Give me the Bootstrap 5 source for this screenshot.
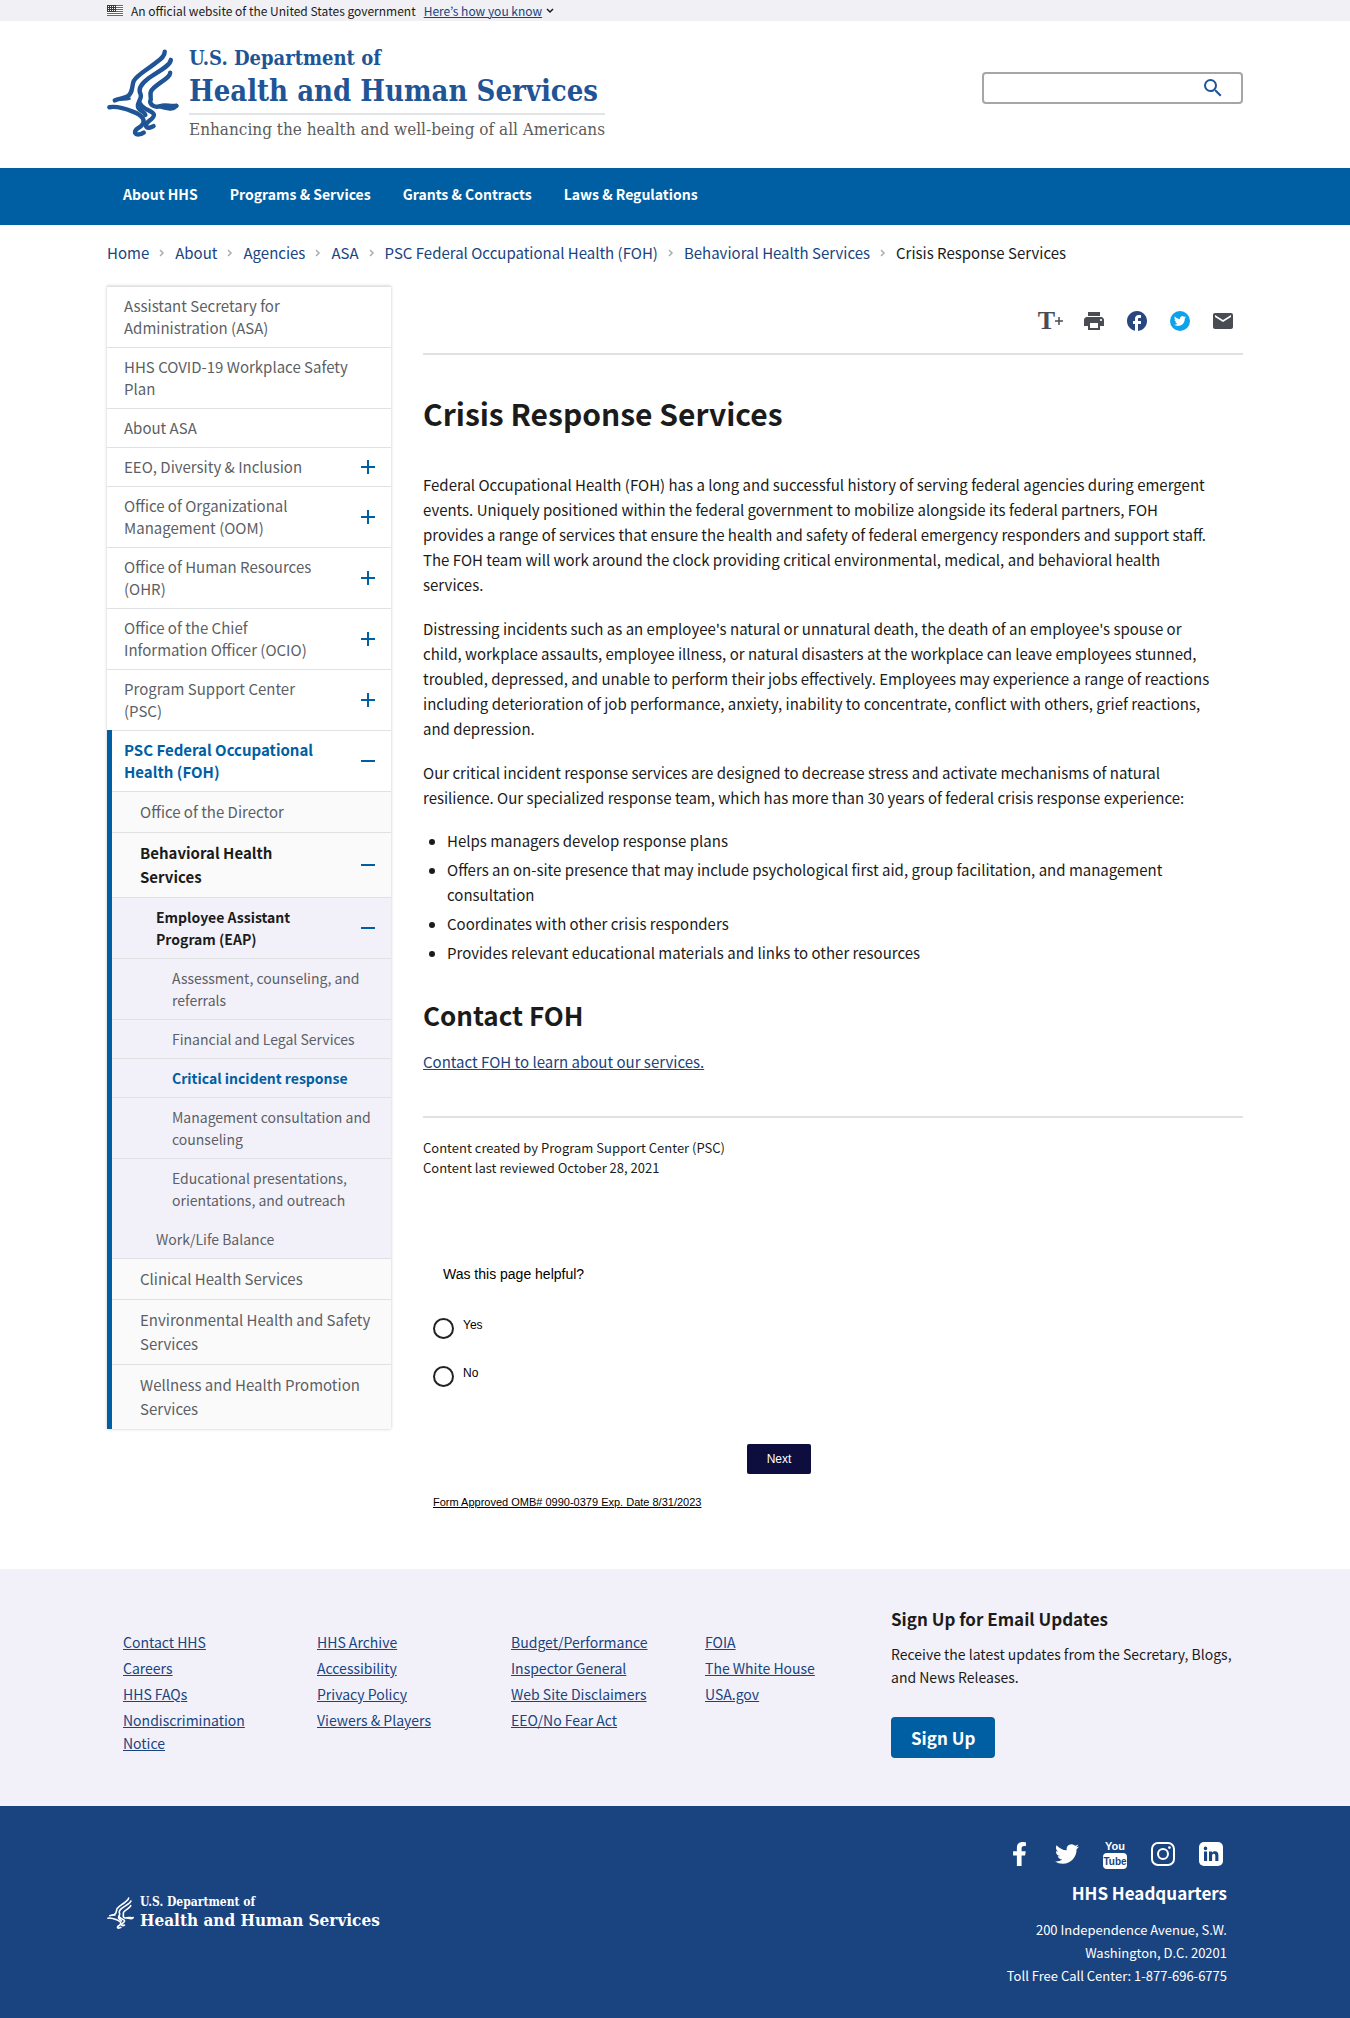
<!DOCTYPE html>
<html lang="en">
<head>
<meta charset="utf-8">
<meta name="viewport" content="width=device-width, initial-scale=1">
<title>Crisis Response Services | HHS.gov</title>
<link href="https://cdn.jsdelivr.net/npm/bootstrap@5.3.0/dist/css/bootstrap.min.css" rel="stylesheet">
<style>
  :root { --hhs-blue: #005ea2; --hhs-navy: #1a4480; --hhs-ink: #1b1b1b; --hhs-mist: #f2f1f9; --hhs-line: #dfe1e2; }
  body { font-family: "Noto Sans CJK KR", "Open Sans", sans-serif; font-size: 15px; line-height: 25px; color: var(--hhs-ink); }
  a { color: var(--hhs-navy); }
  .site-width { max-width: 1200px; padding-left: 32px; padding-right: 32px; }
  .gov-strip { background: #f0f0f5; font-size: 12px; line-height: 21px; }
  .gov-strip .btn { font-size: 12px; line-height: 21px; color: var(--hhs-navy); text-decoration: underline; }
  .masthead { height: 147px; }
  .brand-top { font-family: "DejaVu Serif Condensed", "DejaVu Serif", serif; font-weight: 700; color: #1f5496; }
  .brand-link { text-decoration: none; }
  .brand-text { margin-left: 10px; }
  .brand-l1 { font-size: 20px; line-height: 27px; }
  .brand-l2 { font-size: 29px; line-height: 38px; padding-bottom: 3px; }
  .brand-l3 { font-size: 17px; line-height: 22px; color: #5c5c5c; border-top: 2px solid #e3e4e6; padding-top: 3px; }
  .search-box { width: 261px; height: 32px; margin-top: 51px; border: 2px solid #a6a6a6; border-radius: 4px; }
  .search-box input { border: 0; outline: 0; background: none; min-width: 0; }
  .main-nav { background: var(--hhs-blue); height: 57px; }
  .main-nav ul { padding-top: 13px; }
  .main-nav a { color: #fff; font-weight: 700; font-size: 14px; line-height: 20px; text-decoration: none; }
  .crumb-bar { padding: 16px 0 21px; }
  .crumbs { line-height: 24px; }
  .crumbs a { text-decoration: none; }
  .crumbs li { display: flex; align-items: center; }
  .crumbs svg { margin: 0 10px; }

  .side-menu { box-shadow: 0 0 3px #c8c8c8; line-height: 22px; }
  .side-menu ul { list-style: none; margin: 0; padding: 0; }
  .side-menu .entry { display: flex; align-items: center; justify-content: space-between; padding: 8px 15px 8px 17px; border-top: 1px solid var(--hhs-line); }
  .side-menu a { color: #5c5f66; text-decoration: none; }
  .side-menu .toggle { border: 0; background: none; padding: 0; flex: none; width: 16px; height: 16px; margin-left: 16px; display: flex; }
  .side-menu .open-branch { border-left: 5px solid var(--hhs-blue); }
  .side-menu .open-branch > .entry { padding-left: 12px; }
  .side-menu .open-branch > .entry a, .side-menu a.here { color: var(--hhs-blue); font-weight: 700; }
  .side-menu a.parent { color: var(--hhs-ink); font-weight: 700; }
  .tier2 > li > .entry { background: #fafafa; padding-left: 28px; line-height: 24px; }
  .tier3, .tier4 { background: var(--hhs-mist); font-size: 14px; }
  .tier3 > li > .entry { padding-left: 44px; }
  .tier4 > li > .entry { padding-left: 60px; }
  .side-menu .no-rule { border-top-color: transparent; }

  .rule { border-bottom: 2px solid var(--hhs-line); }
  .share-bar { height: 69px; padding: 8px 8px 5px 0; gap: 19px; }
  .share-bar button, .share-bar a { border: 0; background: none; padding: 0; display: flex; color: #4a4c53; }
  .share-bar .text-size { font-family: "Liberation Serif", serif; font-weight: 700; font-size: 26px; line-height: 28px; align-items: center; }
  h1 { font-size: 30px; line-height: 38px; font-weight: 700; margin: 39px 0 40px; }
  h2 { font-size: 26px; line-height: 32px; font-weight: 700; margin: 34px 0 18px; }
  .story p { margin-bottom: 19px; }
  .story ul { padding-left: 24px; margin: -1px 0 0; }
  .story li { margin-bottom: 4px; }
  .story-end { padding-top: 23px; }
  .stamp { font-size: 13px; line-height: 20px; }
  .survey { max-width: 712px; font-family: "Liberation Sans", Arial, sans-serif; font-size: 12px; color: #000; padding: 86px 10px 0; }
  .survey legend { font-size: 14px; line-height: 20px; padding-left: 10px; margin-bottom: 34px; }
  .survey .choice { height: 48px; display: flex; gap: 9px; }
  .survey .choice label { line-height: 14px; }
  .survey .choice input { appearance: none; width: 21px; height: 21px; border: 2px solid #222; border-radius: 50%; margin: 0; background: #fff; }
  .survey .next-row { padding: 30px 0 20px; }
  .survey .btn { background: #0e0e3e; color: #fff; font-size: 12px; line-height: 18px; padding: 6px 20px; border: 0; border-radius: 2px; }
  .survey .omb { font-size: 11px; line-height: 16px; color: #000; }

  .page-foot { margin-top: 59px; }
  .foot-links { background: var(--hhs-mist); font-size: 14px; line-height: 23px; }
  .foot-links .link-grid { display: grid; grid-template-columns: repeat(4, 1fr); column-gap: 8px; padding: 38px 0 0 16px; }
  .foot-links .link-grid li { margin-bottom: 3px; }
  .signup { width: 352px; padding-top: 14px; }
  .signup h3 { font-size: 17px; line-height: 24px; font-weight: 700; margin: 0 0 12px; }
  .signup .btn { background: var(--hhs-blue); color: #fff; font-weight: 700; font-size: 17px; line-height: 21px; padding: 10px 20px; border: 0; border-radius: 4px; }
  .foot-base { background: var(--hhs-navy); color: #fff; font-size: 13px; line-height: 23px; }
  .foot-base .brand-top { color: #fff; }
  .foot-base .brand-text { margin-left: 6px; }
  .foot-base .brand-l1 { font-size: 12px; line-height: 14px; }
  .foot-base .brand-l2 { font-size: 17px; line-height: 22px; padding: 0; }
  .foot-base .hq { font-size: 17px; line-height: 24px; font-weight: 700; margin: 11px 0 13px; }
  .social { gap: 20px; padding-right: 2px; }
  .social a { display: flex; width: 28px; height: 32px; align-items: center; justify-content: center; }
</style>
<script src="https://cdn.jsdelivr.net/npm/bootstrap@5.3.0/dist/js/bootstrap.bundle.min.js"></script>
</head>
<body>
<svg width="0" height="0" class="position-absolute" aria-hidden="true">
  <symbol id="eagle" viewBox="50 150 212 260" preserveAspectRatio="none">
    <g fill="none" stroke="currentColor" stroke-width="13" stroke-linecap="round" stroke-linejoin="round">
      <path d="M220 158C220 174 204 182 188 195C164 214 140 226 129 244C122 258 128 282 108 291C96 297 82 296 73 302"/>
      <path d="M73 302C86 298 104 300 116 297" stroke-width="8"/>
      <path d="M238 182C236 202 196 218 168 240C146 257 142 270 149 284C154 296 139 306 141 320C143 332 160 334 163 345"/>
      <path d="M236 220C236 236 202 248 183 270C171 283 184 294 177 305C178 316 192 324 206 319C220 314 236 320 254 318"/>
      <path d="M206 319C216 323 226 324 238 326C246 326 250 322 254 318"/>
      <path d="M57 322C80 318 104 326 126 335C154 345 166 362 152 376C142 386 130 386 133 398C137 406 150 402 158 397"/>
      <path d="M148 312C156 330 186 332 188 344C190 358 162 364 165 378C168 386 180 382 187 378"/>
    </g>
  </symbol>
  <symbol id="bird" viewBox="0 0 24 24"><path d="M23.953 4.57a10 10 0 01-2.825.775 4.958 4.958 0 002.163-2.723c-.951.555-2.005.959-3.127 1.184a4.92 4.92 0 00-8.384 4.482C7.69 8.095 4.067 6.13 1.64 3.162a4.822 4.822 0 00-.666 2.475c0 1.71.87 3.213 2.188 4.096a4.904 4.904 0 01-2.228-.616v.06a4.923 4.923 0 003.946 4.827 4.996 4.996 0 01-2.212.085 4.936 4.936 0 004.604 3.417 9.867 9.867 0 01-6.102 2.105c-.39 0-.779-.023-1.17-.067a13.995 13.995 0 007.557 2.209c9.053 0 13.998-7.496 13.998-13.985 0-.21 0-.42-.015-.63A9.935 9.935 0 0024 4.59z"/></symbol>
  <symbol id="plus" viewBox="0 0 16 16"><path d="M1 8H15M8 1V15" stroke="#005ea2" stroke-width="2"/></symbol>
  <symbol id="minus" viewBox="0 0 16 16"><path d="M1 8H15" stroke="#005ea2" stroke-width="2"/></symbol>
  <symbol id="chev" viewBox="0 0 6 8"><path d="M1 1L4 4L1 7" fill="none" stroke="#a9aeb1" stroke-width="1.5"/></symbol>
</svg>

<div class="gov-strip">
  <div class="container-fluid site-width d-flex align-items-center">
    <svg class="me-2" width="16" height="11" viewBox="0 0 16 11" aria-hidden="true"><path fill="#fff" d="M0 0h16v11H0z"/><path d="M0 .5h16M0 2.5h16M0 4.5h16M0 6.5h16M0 8.5h16M0 10.5h16" stroke="#db3e1f"/><path fill="#1e33b1" d="M0 0h9v7H0z"/><path d="M1 1.5h7M1 3.5h7M1 5.5h7" stroke="#fff" stroke-dasharray="1 1"/></svg>
    <span>An official website of the United States government</span>
    <button type="button" class="btn p-0 border-0 ms-2">Here’s how you know</button>
    <svg class="ms-1" width="8" height="6" viewBox="0 0 8 6" aria-hidden="true"><path d="M1 1L4 4L7 1" fill="none" stroke="#1b1b1b" stroke-width="1.5"/></svg>
  </div>
</div>

<header>
  <div class="container-fluid site-width masthead d-flex align-items-start justify-content-between">
    <a href="#" class="brand-link d-flex align-items-start">
      <svg class="mt-4 pt-1 brand-top" width="72" height="92" aria-hidden="true"><use href="#eagle"/></svg>
      <span class="brand-top brand-text d-block mt-4">
        <span class="brand-l1 d-block">U.S. Department of</span>
        <span class="brand-l2 d-block">Health and Human Services</span>
        <span class="brand-l3 fw-normal d-block">Enhancing the health and well-being of all Americans</span>
      </span>
    </a>
    <form class="search-box d-flex align-items-center" role="search">
      <input id="site-search" class="flex-grow-1" type="search" aria-label="Search">
      <button type="submit" class="btn p-0 border-0 me-3 d-flex" aria-label="Search"><svg width="24" height="24" viewBox="0 0 24 24" fill="#1f5496"><path d="M15.5 14h-.79l-.28-.27A6.471 6.471 0 0 0 16 9.5 6.5 6.5 0 1 0 9.5 16c1.61 0 3.09-.59 4.23-1.57l.27.28v.79l5 4.99L20.49 19l-4.99-5zm-6 0C7.01 14 5 11.99 5 9.5S7.01 5 9.5 5 14 7.01 14 9.5 11.99 14 9.5 14z"/></svg></button>
    </form>
  </div>
  <nav class="main-nav" aria-label="Main">
    <ul class="container-fluid site-width list-unstyled d-flex mb-0">
      <li class="px-3"><a href="#">About HHS</a></li>
      <li class="px-3"><a href="#">Programs &amp; Services</a></li>
      <li class="px-3"><a href="#">Grants &amp; Contracts</a></li>
      <li class="px-3"><a href="#">Laws &amp; Regulations</a></li>
    </ul>
  </nav>
</header>

<div class="container-fluid site-width">
  <nav aria-label="Breadcrumb" class="crumb-bar">
    <ol class="crumbs list-unstyled d-flex flex-wrap mb-0">
      <li><a href="#">Home</a><svg width="6" height="8"><use href="#chev"/></svg></li>
      <li><a href="#">About</a><svg width="6" height="8"><use href="#chev"/></svg></li>
      <li><a href="#">Agencies</a><svg width="6" height="8"><use href="#chev"/></svg></li>
      <li><a href="#">ASA</a><svg width="6" height="8"><use href="#chev"/></svg></li>
      <li><a href="#">PSC Federal Occupational Health (FOH)</a><svg width="6" height="8"><use href="#chev"/></svg></li>
      <li><a href="#">Behavioral Health Services</a><svg width="6" height="8"><use href="#chev"/></svg></li>
      <li aria-current="page">Crisis Response Services</li>
    </ol>
  </nav>

  <div class="row g-0">
    <aside class="col-3">
      <nav class="side-menu" aria-label="Section">
        <ul>
          <li><div class="entry"><a href="#">Assistant Secretary for<br>Administration (ASA)</a></div></li>
          <li><div class="entry"><a href="#">HHS COVID-19 Workplace Safety Plan</a></div></li>
          <li><div class="entry"><a href="#">About ASA</a></div></li>
          <li><div class="entry"><a href="#">EEO, Diversity &amp; Inclusion</a><button class="toggle" type="button" aria-label="Expand"><svg width="16" height="16"><use href="#plus"/></svg></button></div></li>
          <li><div class="entry"><a href="#">Office of Organizational Management (OOM)</a><button class="toggle" type="button" aria-label="Expand"><svg width="16" height="16"><use href="#plus"/></svg></button></div></li>
          <li><div class="entry"><a href="#">Office of Human Resources<br>(OHR)</a><button class="toggle" type="button" aria-label="Expand"><svg width="16" height="16"><use href="#plus"/></svg></button></div></li>
          <li><div class="entry"><a href="#">Office of the Chief<br>Information Officer (OCIO)</a><button class="toggle" type="button" aria-label="Expand"><svg width="16" height="16"><use href="#plus"/></svg></button></div></li>
          <li><div class="entry"><a href="#">Program Support Center<br>(PSC)</a><button class="toggle" type="button" aria-label="Expand"><svg width="16" height="16"><use href="#plus"/></svg></button></div></li>
          <li class="open-branch">
            <div class="entry"><a href="#">PSC Federal Occupational<br>Health (FOH)</a><button class="toggle" type="button" aria-label="Collapse"><svg width="16" height="16"><use href="#minus"/></svg></button></div>
            <ul class="tier2">
              <li><div class="entry"><a href="#">Office of the Director</a></div></li>
              <li>
                <div class="entry"><a class="parent" href="#">Behavioral Health<br>Services</a><button class="toggle" type="button" aria-label="Collapse"><svg width="16" height="16"><use href="#minus"/></svg></button></div>
                <ul class="tier3">
                  <li>
                    <div class="entry"><a class="parent" href="#">Employee Assistant<br>Program (EAP)</a><button class="toggle" type="button" aria-label="Collapse"><svg width="16" height="16"><use href="#minus"/></svg></button></div>
                    <ul class="tier4">
                      <li><div class="entry"><a href="#">Assessment, counseling, and referrals</a></div></li>
                      <li><div class="entry"><a href="#">Financial and Legal Services</a></div></li>
                      <li><div class="entry"><a class="here" href="#">Critical incident response</a></div></li>
                      <li><div class="entry"><a href="#">Management consultation and counseling</a></div></li>
                      <li><div class="entry"><a href="#">Educational presentations, orientations, and outreach</a></div></li>
                    </ul>
                  </li>
                  <li><div class="entry no-rule"><a href="#">Work/Life Balance</a></div></li>
                </ul>
              </li>
              <li><div class="entry"><a href="#">Clinical Health Services</a></div></li>
              <li><div class="entry"><a href="#">Environmental Health and Safety Services</a></div></li>
              <li><div class="entry"><a href="#">Wellness and Health Promotion Services</a></div></li>
            </ul>
          </li>
        </ul>
      </nav>
    </aside>

    <main class="col-9 ps-4">
      <div class="ps-2">
      <div class="share-bar rule d-flex justify-content-end align-items-center">
        <button type="button" class="text-size" aria-label="Resize text">T<svg width="8" height="8" viewBox="0 0 8 8"><path d="M0 4H8M4 0V8" stroke="#4a4c53" stroke-width="1.5"/></svg></button>
        <button type="button" aria-label="Print"><svg width="24" height="24" viewBox="0 0 24 24" fill="currentColor"><path d="M19 8H5c-1.66 0-3 1.34-3 3v6h4v4h12v-4h4v-6c0-1.66-1.34-3-3-3zm-3 11H8v-5h8v5zm3-7c-.55 0-1-.45-1-1s.45-1 1-1 1 .45 1 1-.45 1-1 1zm-1-9H6v4h12V3z"/></svg></button>
        <a href="#" aria-label="Facebook"><svg width="24" height="24" viewBox="0 0 24 24" fill="#28477f"><path d="M22 12c0-5.52-4.48-10-10-10S2 6.48 2 12c0 4.84 3.44 8.87 8 9.8V15H8v-3h2V9.5C10 7.57 11.57 6 13.5 6H16v3h-2c-.55 0-1 .45-1 1v2h3v3h-3v6.95c5.05-.5 9-4.76 9-9.95z"/></svg></a>
        <a href="#" aria-label="Twitter"><svg width="24" height="24" viewBox="0 0 24 24"><circle cx="12" cy="12" r="10" fill="#0ea2ea"/><use href="#bird" x="6" y="6" width="12" height="12" fill="#fff"/></svg></a>
        <a href="#" aria-label="Email"><svg width="24" height="24" viewBox="0 0 24 24" fill="currentColor"><path d="M20 4H4c-1.1 0-1.99.9-1.99 2L2 18c0 1.1.9 2 2 2h16c1.1 0 2-.9 2-2V6c0-1.1-.9-2-2-2zm0 4l-8 5-8-5V6l8 5 8-5v2z"/></svg></a>
      </div>

      <article class="story">
        <h1>Crisis Response Services</h1>
        <p>Federal Occupational Health (FOH) has a long and successful history of serving federal agencies during emergent<br>events. Uniquely positioned within the federal government to mobilize alongside its federal partners, FOH<br>provides a range of services that ensure the health and safety of federal emergency responders and support staff.<br>The FOH team will work around the clock providing critical environmental, medical, and behavioral health<br>services.</p>
        <p>Distressing incidents such as an employee's natural or unnatural death, the death of an employee's spouse or<br>child, workplace assaults, employee illness, or natural disasters at the workplace can leave employees stunned,<br>troubled, depressed, and unable to perform their jobs effectively. Employees may experience a range of reactions<br>including deterioration of job performance, anxiety, inability to concentrate, conflict with others, grief reactions,<br>and depression.</p>
        <p>Our critical incident response services are designed to decrease stress and activate mechanisms of natural<br>resilience. Our specialized response team, which has more than 30 years of federal crisis response experience:</p>
        <ul>
          <li>Helps managers develop response plans</li>
          <li>Offers an on-site presence that may include psychological first aid, group facilitation, and management<br>consultation</li>
          <li>Coordinates with other crisis responders</li>
          <li>Provides relevant educational materials and links to other resources</li>
        </ul>
        <h2>Contact FOH</h2>
        <p><a href="#">Contact FOH to learn about our services.</a></p>
      </article>

      <div class="rule story-end"></div>
      <div class="stamp pt-3 mt-1">
        <div>Content created by Program Support Center (PSC)</div>
        <div>Content last reviewed October 28, 2021</div>
      </div>

      <form class="survey">
        <fieldset>
          <legend>Was this page helpful?</legend>
          <div class="choice"><input type="radio" name="helpful" id="yes"><label for="yes">Yes</label></div>
          <div class="choice"><input type="radio" name="helpful" id="no"><label for="no">No</label></div>
        </fieldset>
        <div class="text-center next-row"><button type="button" class="btn">Next</button></div>
        <a href="#" class="omb d-block">Form Approved OMB# 0990-0379 Exp. Date 8/31/2023</a>
      </form>
      </div>
    </main>
  </div>
</div>

<footer class="page-foot">
  <div class="foot-links">
    <div class="container-fluid site-width d-flex pt-4 pb-5">
      <div class="link-grid flex-grow-1">
        <ul class="list-unstyled mb-0">
          <li><a href="#">Contact HHS</a></li><li><a href="#">Careers</a></li><li><a href="#">HHS FAQs</a></li><li><a href="#">Nondiscrimination<br>Notice</a></li>
        </ul>
        <ul class="list-unstyled mb-0">
          <li><a href="#">HHS Archive</a></li><li><a href="#">Accessibility</a></li><li><a href="#">Privacy Policy</a></li><li><a href="#">Viewers &amp; Players</a></li>
        </ul>
        <ul class="list-unstyled mb-0">
          <li><a href="#">Budget/Performance</a></li><li><a href="#">Inspector General</a></li><li><a href="#">Web Site Disclaimers</a></li><li><a href="#">EEO/No Fear Act</a></li>
        </ul>
        <ul class="list-unstyled mb-0">
          <li><a href="#">FOIA</a></li><li><a href="#">The White House</a></li><li><a href="#">USA.gov</a></li>
        </ul>
      </div>
      <div class="signup flex-shrink-0">
        <h3>Sign Up for Email Updates</h3>
        <p class="mb-4">Receive the latest updates from the Secretary, Blogs,<br>and News Releases.</p>
        <button type="button" class="btn mt-1">Sign Up</button>
      </div>
    </div>
  </div>
  <div class="foot-base">
    <div class="container-fluid site-width d-flex justify-content-between align-items-center py-4">
      <a href="#" class="brand-link d-flex align-items-center">
        <svg class="brand-top" width="27" height="32" aria-hidden="true"><use href="#eagle"/></svg>
        <span class="brand-top brand-text d-block">
          <span class="brand-l1 d-block">U.S. Department of</span>
          <span class="brand-l2 d-block">Health and Human Services</span>
        </span>
      </a>
      <div class="text-end pe-3 pt-2">
        <div class="social d-flex justify-content-end">
          <a href="#" aria-label="Facebook"><svg width="15" height="24" viewBox="0 0 320 512" fill="#fff"><path d="M279.14 288l14.22-92.66h-88.91v-60.13c0-25.35 12.42-50.06 52.24-50.06h40.42V6.26S260.43 0 225.36 0c-73.22 0-121.08 44.38-121.08 124.72v70.62H22.89V288h81.39v224h100.17V288z"/></svg></a>
          <a href="#" aria-label="Twitter"><svg width="24" height="24" fill="#fff"><use href="#bird"/></svg></a>
          <a href="#" aria-label="YouTube"><svg width="26" height="32" viewBox="0 0 26 32"><g font-family="Liberation Sans, Arial, sans-serif" font-weight="700" text-anchor="middle"><text x="13" y="12" font-size="11" fill="#fff">You</text><rect x="1" y="15" width="24" height="16" rx="4" fill="#fff"/><text x="13" y="27" font-size="10" fill="#1a4480">Tube</text></g></svg></a>
          <a href="#" aria-label="Instagram"><svg width="24" height="24" viewBox="0 0 24 24" fill="none" stroke="#fff" stroke-width="2"><rect x="1" y="1" width="22" height="22" rx="6"/><circle cx="12" cy="12" r="5"/><circle cx="18.4" cy="5.6" r="1.4" fill="#fff" stroke="none"/></svg></a>
          <a href="#" aria-label="LinkedIn"><svg width="24" height="24" viewBox="0 0 24 24"><rect width="24" height="24" rx="5" fill="#fff"/><path fill="#1a4480" d="M5 9.400h3.100V19H5zM6.500 4.600a1.800 1.800 0 1 1 0 3.600 1.800 1.800 0 0 1 0-3.600zM10 9.400h3v1.300c.5-.9 1.500-1.500 2.900-1.500 2.800 0 3.500 1.800 3.500 4.300V19h-3.100v-4.900c0-1.200-.1-2.400-1.500-2.400-1.500 0-1.700 1.200-1.700 2.400V19H10z"/></svg></a>
        </div>
        <div class="hq">HHS Headquarters</div>
        <div>200 Independence Avenue, S.W.</div>
        <div>Washington, D.C. 20201</div>
        <div class="pb-2">Toll Free Call Center: 1-877-696-6775</div>
      </div>
    </div>
  </div>
</footer>
</body>
</html>
